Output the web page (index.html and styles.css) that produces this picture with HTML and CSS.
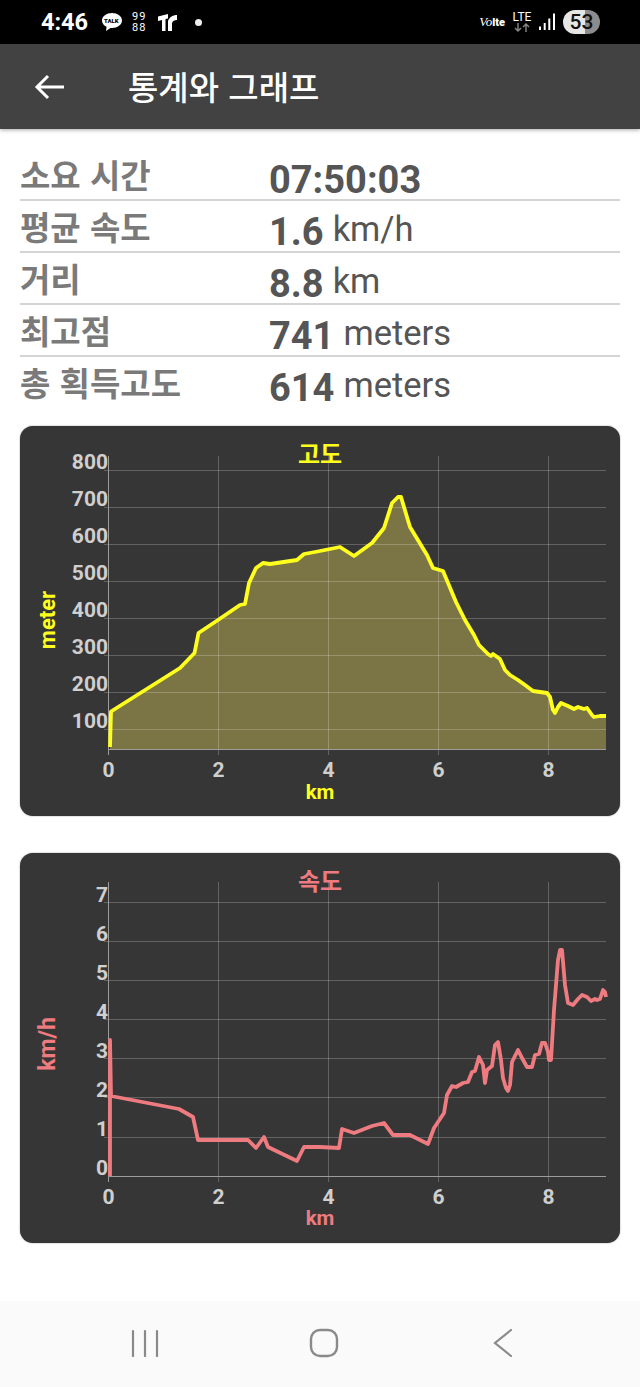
FILE: index.html
```html
<!DOCTYPE html>
<html lang="ko">
<head>
<meta charset="utf-8">
<title>통계와 그래프</title>
<link rel="stylesheet" href="styles.css">
</head>
<body>
<div class="status">
  <span class="time">4:46</span>
  <span class="talk"><svg class="talk-bubble" width="22" height="20" viewBox="0 0 22 20"><path d="M11 1C5.500 1 1 4.300 1 8.500c0 2.700 1.900 5 4.600 6.300L5 19l4.500-3.100c.5.100 1 .1 1.500.1 5.500 0 10-3.300 10-7.500S16.500 1 11 1z" fill="#fff"/></svg><span class="talk-text">TALK</span></span>
  <span class="nines"><span>99</span><span>88</span></span>
  <svg class="tr" width="20" height="20" viewBox="0 0 20 20"><path d="M0 4.500 10 2v4.500L7.500 7v12H4V8L0 9zM10 9c1.500-4 5-6 9-6v5c-2.500 0-4.500 1-5 3v8h-4z" fill="#fff"/></svg>
  <span class="dot"></span>
  <span class="spacer"></span>
  <span class="volte"><i>Vo</i><b>lte</b></span>
  <span class="lte"><span>LTE</span><svg width="16" height="9" viewBox="0 0 16 9"><path d="M4 0v8M1 5l3 3 3-3" fill="none" stroke="#888" stroke-width="1.400"/><path d="M12 9V1M9 4l3-3 3 3" fill="none" stroke="#888" stroke-width="1.400"/></svg></span>
  <svg class="signal" width="16" height="20" viewBox="0 0 16 20"><path d="M0 14.500h2V18H0zM4.700 11h2v7h-2zM9.300 6.500h2V18h-2zM14 1.500h2V18h-2z" fill="#fff"/></svg>
  <span class="battery">53</span>
</div>

<header class="appbar">
  <svg class="back" width="32" height="32" viewBox="0 0 32 32"><path d="M30 16H3M14 5 3 16l11 11" fill="none" stroke="#fff" stroke-width="3"/></svg>
  <h1 class="title">통계와 그래프</h1>
</header>

<main class="content">
  <section class="stats">
    <div class="row"><span class="label">소요 시간</span><span class="value"><b>07:50:03</b></span></div>
    <div class="row"><span class="label">평균 속도</span><span class="value"><b>1.6</b><span class="unit">km/h</span></span></div>
    <div class="row"><span class="label">거리</span><span class="value"><b>8.8</b><span class="unit">km</span></span></div>
    <div class="row"><span class="label">최고점</span><span class="value"><b>741</b><span class="unit">meters</span></span></div>
    <div class="row"><span class="label">총 획득고도</span><span class="value"><b>614</b><span class="unit">meters</span></span></div>
  </section>

  <section class="card">
    <svg class="chart" width="600" height="390" viewBox="20 426 600 390">
      <path class="area-alt" d="M110 749L110 747 111 711.500 180 668 194.500 653 198.500 633 218 620 240 605 245 604 249 583 256 568 263 563 270 564 297 560 304 554 315 552 340 547 354 556 372 543 384 528 392 503 398 497 401 497 410 527 427 555 433 568 443 571 456 602 465 620 474 635 479 645 488 654 491 656 493 654 500 659 505 670 510 675 518 680 525 685 533 691 540 692 547 693 550 697 553 710 555 713 558 707 561 703 568 706 574 709 578 707 584 709 587 708 592 715 594 717 600 716 606 716 606 749z"/>
      <path class="grid" d="M218.500 456V755M328.500 456V755M438.500 456V755M548.500 456V755M104 470.500H606M104 507.500H606M104 544.500H606M104 581.500H606M104 618.500H606M104 655.500H606M104 692.500H606M104 729.500H606"/>
      <path class="axis" d="M108.500 456V755M108.500 749.500H606"/>
      <path class="line-alt" d="M110 747 111 711.500 180 668 194.500 653 198.500 633 218 620 240 605 245 604 249 583 256 568 263 563 270 564 297 560 304 554 315 552 340 547 354 556 372 543 384 528 392 503 398 497 401 497 410 527 427 555 433 568 443 571 456 602 465 620 474 635 479 645 488 654 491 656 493 654 500 659 505 670 510 675 518 680 525 685 533 691 540 692 547 693 550 697 553 710 555 713 558 707 561 703 568 706 574 709 578 707 584 709 587 708 592 715 594 717 600 716 606 716"/>
      <text class="ttl alt" x="320" y="463">고도</text>
      <g class="ylab">
        <text x="108" y="469">800</text><text x="108" y="506">700</text><text x="108" y="543">600</text><text x="108" y="580">500</text><text x="108" y="617">400</text><text x="108" y="654">300</text><text x="108" y="691">200</text><text x="108" y="728">100</text>
      </g>
      <g class="xlab">
        <text x="108.500" y="777">0</text><text x="218.500" y="777">2</text><text x="328.500" y="777">4</text><text x="438.500" y="777">6</text><text x="548.500" y="777">8</text>
      </g>
      <text class="axt alt" x="320" y="799">km</text>
      <text class="axr alt" transform="translate(55 620) rotate(-90)">meter</text>
    </svg>
  </section>

  <section class="card">
    <svg class="chart" width="600" height="390" viewBox="20 853 600 390">
      <path class="grid" d="M218.500 882V1182M328.500 882V1182M438.500 882V1182M548.500 882V1182M104 902.500H606M104 941.500H606M104 980.500H606M104 1019.500H606M104 1058.500H606M104 1097.500H606M104 1137.500H606"/>
      <path class="axis" d="M108.500 882V1182M108.500 1176.500H606"/>
      <path class="line-spd" d="M110 1176 110 1040 111 1096 179 1109 193 1117 198 1140 248 1140 256 1148 264 1137 268 1147 297 1161 304 1147 320 1147 339 1148 342 1129 354 1133 372 1126 384 1123 393 1135 410 1135 428 1144 434 1128 444 1113 447 1095 452 1086 456 1087 463 1083 468 1082 472 1072 475 1071 479 1057 483 1065 485 1083 487 1070 492 1066 495 1045 498 1042 501 1060 503 1078 506 1088 508 1091 510 1085 512 1062 515 1056 518 1050 522 1058 527 1067 532 1067 535 1055 539 1054 542 1043 545 1043 548 1052 549 1060 551 1060 554 1010 558 960 560 950 562 950 565 985 568 1003 573 1005 578 999 582 995 587 997 591 1001 595 999 597 1000 600 999 603 990 605 992 606 997"/>
      <text class="ttl spd" x="320" y="890">속도</text>
      <g class="ylab">
        <text x="108" y="902">7</text><text x="108" y="941">6</text><text x="108" y="980">5</text><text x="108" y="1019">4</text><text x="108" y="1058">3</text><text x="108" y="1097">2</text><text x="108" y="1136">1</text><text x="108" y="1175">0</text>
      </g>
      <g class="xlab">
        <text x="108.500" y="1204">0</text><text x="218.500" y="1204">2</text><text x="328.500" y="1204">4</text><text x="438.500" y="1204">6</text><text x="548.500" y="1204">8</text>
      </g>
      <text class="axt spd" x="320" y="1225">km</text>
      <text class="axh spd" transform="translate(55 1044) rotate(-90)">km/h</text>
    </svg>
  </section>
</main>

<nav class="navbar">
  <svg width="28" height="28" viewBox="0 0 28 28"><path d="M2 2v25M14 2v25M26 2v25" fill="none" stroke="#8a8a8a" stroke-width="2.200" stroke-linecap="round"/></svg>
  <svg width="30" height="30" viewBox="0 0 30 30"><rect x="2" y="2" width="26" height="26" rx="9" fill="none" stroke="#8a8a8a" stroke-width="2.400"/></svg>
  <svg width="20" height="30" viewBox="0 0 20 30"><path d="M18 2 2 15l16 13" fill="none" stroke="#8a8a8a" stroke-width="2.200" stroke-linecap="round"/></svg>
</nav>
</body>
</html>
```
FILE: styles.css
```css
* { box-sizing: border-box; }
html, body { margin: 0; padding: 0; }
body {
  width: 640px;
  height: 1387px;
  display: flex;
  flex-direction: column;
  overflow: hidden;
  background: #fff;
  font-family: Roboto, "Noto Sans CJK KR", sans-serif;
}

/* status bar */
.status {
  height: 44px;
  flex: none;
  background: #000;
  color: #fff;
  display: flex;
  align-items: center;
  padding: 0 41px 0 41px;
}
.time { font-size: 23.500px; font-weight: 700; width: 60px; }
.talk { position: relative; width: 22px; height: 20px; display: block; }
.talk-bubble { display: block; }
.talk-text {
  position: absolute; left: 3px; top: 5px;
  font-size: 6px; font-weight: 900; color: #000; line-height: 8px;
}
.nines {
  margin-left: 9px; width: 18px;
  display: flex; flex-direction: column;
  font-size: 11px; line-height: 11px; font-weight: 400; letter-spacing: 1px;
}
.tr { margin-left: 8px; }
.dot { width: 7px; height: 7px; border-radius: 50%; background: #eee; margin-left: 17px; }
.spacer { flex: 1; }
.volte { font-size: 11px; display: flex; align-items: baseline; margin-right: 7px; }
.volte i { font-family: "Liberation Serif", serif; font-size: 13px; }
.volte b { font-weight: 900; font-size: 11px; }
.lte {
  width: 20px; display: flex; flex-direction: column; align-items: center;
  font-size: 12px; line-height: 11px; margin-right: 7px;
}
.lte svg { display: block; }
.signal { margin-right: 8px; }
.battery {
  width: 37px; height: 24px; border-radius: 12px;
  margin-right: -1px;
  background: linear-gradient(90deg, #e6e6e6 0 60%, #8c8c8c 60% 100%);
  color: #111; font-size: 21px; font-weight: 500; line-height: 24px; text-align: center;
}

/* app bar */
.appbar {
  height: 85px;
  flex: none;
  background: #424242;
  display: flex;
  align-items: center;
  padding-left: 34px;
  box-shadow: 0 1px 4px rgba(0, 0, 0, .35);
}
.back { display: block; }
.title {
  margin: -2px 0 0 62px;
  color: #fff;
  font-family: "Noto Sans CJK KR", sans-serif;
  font-size: 33px;
  font-weight: 500;
  line-height: 40px;
}

/* stats */
.content { flex: 1; padding: 20px 20px 0; }
.stats { margin-bottom: 17px; }
.row {
  height: 52px;
  display: grid;
  grid-template-columns: 249px 1fr;
  border-bottom: 2px solid #d4d4d4;
  overflow: hidden;
}
.row:last-child { border-bottom: 0; }
.label {
  font-family: "Noto Sans CJK KR", sans-serif;
  font-size: 33px;
  font-weight: 700;
  color: #7a7a7a;
  line-height: 52px;
  height: 52px;
  margin-top: -1px;
}
.value {
  display: flex;
  align-items: baseline;
  color: #555;
  line-height: 52px;
  margin-top: 5px;
}
.value b { font-size: 38px; font-weight: 700; }
.unit {
  font-size: 34.500px; font-weight: 400; margin-left: 9px;
  transform: translateY(-4px);
}

/* charts */
.card {
  height: 390px;
  margin-bottom: 37px;
  background: #363636;
  border-radius: 13px;
  box-shadow: 0 0 1.500px #777;
  overflow: hidden;
}
.chart { display: block; }
.area-alt { fill: #7b7545; }
.grid { fill: none; stroke: rgba(255, 255, 255, .22); stroke-width: 1; }
.axis { fill: none; stroke: #9c9c9c; stroke-width: 1; }
.line-alt { fill: none; stroke: #ffff1e; stroke-width: 3.800; stroke-linejoin: round; }
.line-spd { fill: none; stroke: #ee7b80; stroke-width: 3.800; stroke-linejoin: round; }
.ttl {
  font-family: "Noto Sans CJK KR", sans-serif;
  font-size: 24px; font-weight: 700; text-anchor: middle;
}
.axt { font-size: 20.500px; font-weight: 700; text-anchor: middle; }
.axr { font-size: 22px; font-weight: 700; text-anchor: middle; }
.axh { font-size: 23px; font-weight: 700; text-anchor: middle; }
.alt { fill: #ffff1e; }
.spd { fill: #ee7b80; }
.ylab text { font-size: 21px; font-weight: 700; fill: #cfcfcf; text-anchor: end; }
.xlab text { font-size: 21px; font-weight: 700; fill: #cfcfcf; text-anchor: middle; }

/* navigation */
.navbar {
  height: 86px;
  flex: none;
  background: #fafafa;
  display: grid;
  grid-template-columns: repeat(3, 179px);
  justify-items: center;
  align-items: center;
  padding: 0 0 2px 55px;
}
```
